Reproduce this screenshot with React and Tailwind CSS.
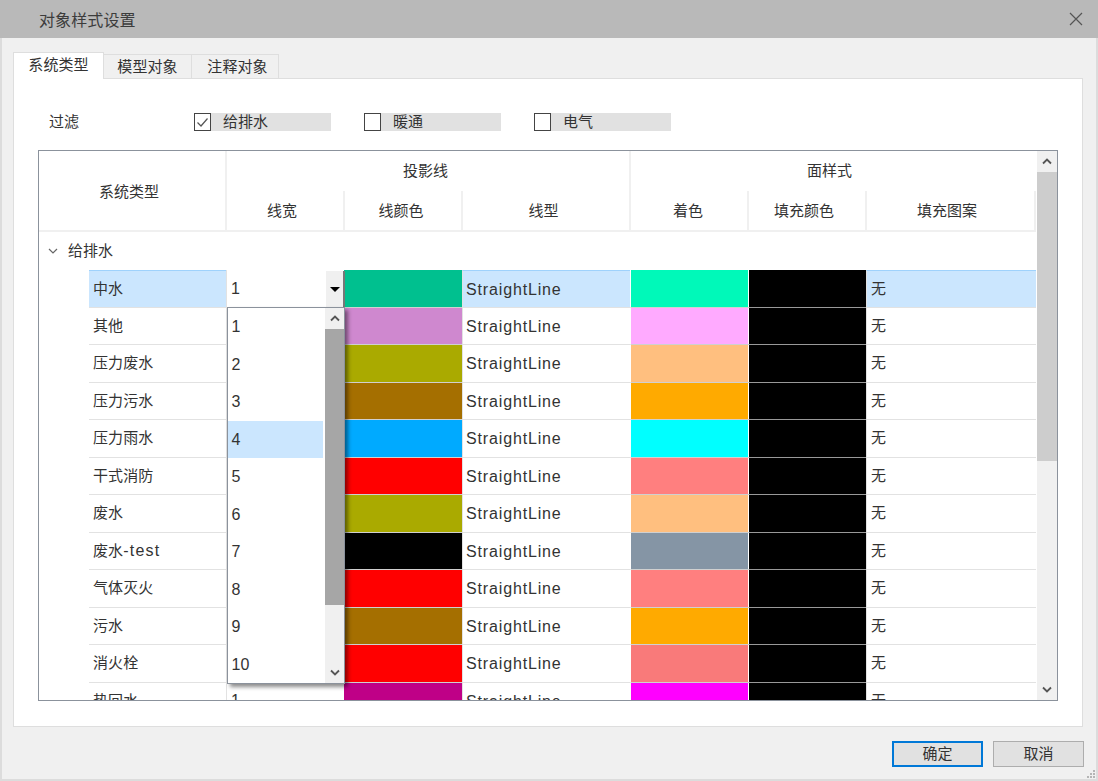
import React from "react";

const rows = [
    { name: "中水", line: "bg-[#00c08f]", face: "bg-[#00f9b9]" },
    { name: "其他", line: "bg-[#cf88cf]", face: "bg-[#ffaaff]" },
    { name: "压力废水", line: "bg-[#aaaa00]", face: "bg-[#ffbf7f]" },
    { name: "压力污水", line: "bg-[#a56f00]", face: "bg-[#ffaa00]" },
    { name: "压力雨水", line: "bg-[#00aaff]", face: "bg-[#00ffff]" },
    { name: "干式消防", line: "bg-[#ff0000]", face: "bg-[#ff7f7f]" },
    { name: "废水", line: "bg-[#aaaa00]", face: "bg-[#ffbf7f]" },
    { name: "废水", suffix: "-test", line: "bg-[#000000]", face: "bg-[#8595a5]" },
    { name: "气体灭火", line: "bg-[#ff0000]", face: "bg-[#ff7f7f]" },
    { name: "污水", line: "bg-[#a56f00]", face: "bg-[#ffaa00]" },
    { name: "消火栓", line: "bg-[#ff0000]", face: "bg-[#f97a7a]" },
    { name: "热回水", line: "bg-[#bf0087]", face: "bg-[#ff00ff]" },
];

const widths = [1, 2, 3, 4, 5, 6, 7, 8, 9, 10];

// chunky scrollbar chevron
const Arrow = ({ up, className }) => (
    <svg width="10" height="7" viewBox="0 0 10 7" className={className}>
        <path d={up ? "M1 5.5 L5 1.5 L9 5.5" : "M1 1.5 L5 5.5 L9 1.5"} fill="none" stroke="#555" strokeWidth="1.8" />
    </svg>
);

const FilterCheck = ({ label, checked }) => (
    <div className="flex h-[18px] w-[137px] items-center bg-[#e1e1e1]">
        <div className="flex h-[18px] w-[17px] items-center justify-center border border-[#444] bg-white">
            {checked && (
                <svg width="13" height="11" viewBox="0 0 13 11">
                    <path d="M1.5 5.5 L5 9 L11.5 1.5" fill="none" stroke="#555" strokeWidth="1.2" />
                </svg>
            )}
        </div>
        <span className="ml-[12px] pt-px">{label}</span>
    </div>
);

const Row = ({ row, selected }) => {
    const cellBg = selected ? "bg-[#cbe6fe]" : "bg-white";
    const rowLine = selected ? "border-t border-t-[#9fd2fc]" : "";
    return (
        <div className="grid h-[37.5px] shrink-0 grid-cols-[50px_137px_118px_118px_168px_118px_118px_170px]">
            <div />
            <div className={`flex items-center border-b border-[#e2e2e2] pl-[4px] tracking-[0.1px] ${cellBg} ${rowLine}`}>
                {row.name}
                {row.suffix && <span className="text-[16px] tracking-[1.2px]">{row.suffix}</span>}
            </div>
            <div className="flex items-center border-b border-l border-[#e2e2e2] bg-white pl-[4px] pt-px text-[16px]">1</div>
            <div className={`border-b border-[#d0d0d0] ${row.line}`} />
            <div className={`flex items-center border-b border-l border-[#e2e2e2] pl-[3px] pt-[2px] text-[16px] tracking-[0.85px] ${cellBg} ${rowLine}`}>StraightLine</div>
            <div className={`border-b border-l border-[#d0d0d0] border-l-white ${row.face}`} />
            <div className="border-b border-l border-[#999] border-l-white bg-black" />
            <div className={`flex items-center border-b border-l border-[#e2e2e2] pl-[4px] ${cellBg} ${rowLine}`}>无</div>
        </div>
    );
};

const WidthDropdown = () => (
    <div className="absolute left-[188px] top-[156px] z-10 flex h-[377px] w-[118px] overflow-hidden border border-[#8b929c] bg-white shadow-[3px_3px_4px_rgba(0,0,0,0.45)]">
        <div className="flex w-[97px] flex-col">
            {widths.map((w) => (
                <div key={w} className={`flex h-[37.5px] w-[95px] shrink-0 items-center pl-[3.5px] pt-px text-[16px] ${w === 4 ? "bg-[#cbe6fe]" : ""}`}>
                    {w}
                </div>
            ))}
        </div>
        <div className="flex w-[19px] flex-col bg-[#f0f0f0]">
            <div className="flex h-[21px] shrink-0 items-center justify-center"><Arrow up /></div>
            <div className="h-[276px] bg-[#a6a6a6]" />
            <div className="mt-auto flex h-[22px] items-center justify-center"><Arrow /></div>
        </div>
    </div>
);

const App = () => {
    return (
        <div className="flex h-[781px] w-[1098px] flex-col overflow-hidden bg-[#f0f0f0] font-['Liberation_Sans','Noto_Sans_CJK_SC',sans-serif] text-[15px] text-[#333]">
            {/* Title bar */}
            <div className="flex h-[38px] shrink-0 items-center justify-between bg-[#b9b9b9] pl-[39px] pr-[15px]">
                <span className="pt-[3px] text-[16px] tracking-[0.1px] text-[#3c3c3c]">对象样式设置</span>
                <svg width="14" height="14" viewBox="0 0 14 14">
                    <path d="M1 1 L13 13 M13 1 L1 13" stroke="#555" strokeWidth="1.2" />
                </svg>
            </div>

            <div className="relative flex min-h-0 flex-1 flex-col border-x-2 border-b-2 border-[#dcdcdc] pl-[11px] pr-[12px] pt-[14px]">
                {/* Tabs */}
                <div className="relative z-10 flex h-[27px] items-end">
                    <div className="flex h-[27px] w-[91px] items-center justify-center border border-b-0 border-[#dedede] bg-white pb-[2px] tracking-[0.1px]">系统类型</div>
                    <div className="flex h-[25px] w-[88px] items-center justify-center border-y border-r border-[#dedede] bg-[#f0f0f0] pt-[1px] tracking-[0.1px]">模型对象</div>
                    <div className="flex h-[25px] w-[87px] items-center justify-center border-y border-r border-[#dedede] bg-[#f0f0f0] pl-[5px] pt-[1px] tracking-[0.1px]">注释对象</div>
                </div>

                {/* Panel */}
                <div className="-mt-px flex h-[649px] w-[1070px] flex-col border border-[#dedede] bg-white pl-[24px]">
                    <div className="mt-[34px] flex h-[18px] items-center">
                        <span className="ml-[11px] w-[145px] pt-px">过滤</span>
                        <div className="flex gap-[33px]">
                            <FilterCheck label="给排水" checked />
                            <FilterCheck label="暖通" />
                            <FilterCheck label="电气" />
                        </div>
                    </div>

                    {/* Table */}
                    <div className="mt-[19px] flex h-[551px] w-[1020px] border border-[#8b929c]">
                        <div className="relative flex w-[997px] flex-col overflow-hidden">
                            <div className="grid h-[81px] shrink-0 grid-cols-[188px_118px_118px_168px_118px_118px_169px] grid-rows-[40px_41px] border-b-2 border-[#f0f0f0]">
                                <div className="row-span-2 flex items-center justify-center border-r-2 border-[#f0f0f0] pr-[6px] pt-[2px]">系统类型</div>
                                <div className="col-span-3 flex items-center justify-center border-r-2 border-[#f0f0f0] pr-[5px]">投影线</div>
                                <div className="col-span-3 flex items-center justify-center pr-[8px]">面样式</div>
                                <div className="flex items-center justify-center border-r-2 border-[#f0f0f0] pr-[6px]">线宽</div>
                                <div className="flex items-center justify-center border-r-2 border-[#f0f0f0] pr-[4px]">线颜色</div>
                                <div className="flex items-center justify-center border-r-2 border-[#f0f0f0] pr-[5px]">线型</div>
                                <div className="flex items-center justify-center border-r-2 border-[#f0f0f0] pr-[2px]">着色</div>
                                <div className="flex items-center justify-center border-r-2 border-[#f0f0f0] pr-[6px]">填充颜色</div>
                                <div className="flex items-center justify-center border-r-2 border-[#f0f0f0] pr-[7px]">填充图案</div>
                            </div>

                            <div className="flex h-[38px] shrink-0 items-center pl-[9px]">
                                <svg width="10" height="6" viewBox="0 0 10 6">
                                    <path d="M1 1 L5 5 L9 1" fill="none" stroke="#666" strokeWidth="1.2" />
                                </svg>
                                <span className="ml-[10px]">给排水</span>
                            </div>

                            {rows.map((row, i) => (
                                <Row key={row.name + (row.suffix || "")} row={row} selected={i === 0} />
                            ))}

                            {/* Combo arrow on the row being edited */}
                            <div className="absolute left-[287px] top-[120px] flex h-[36px] w-[19px] items-center justify-center border-r-2 border-[#777] bg-[#f0f0f0]">
                                <div className="h-0 w-0 border-x-[5px] border-t-[5px] border-x-transparent border-t-black" />
                            </div>

                            <WidthDropdown />
                        </div>

                        {/* Vertical scrollbar */}
                        <div className="ml-px flex w-[20px] flex-col bg-[#f0f0f0]">
                            <div className="flex h-[21px] items-center justify-center"><Arrow up /></div>
                            <div className="h-[289px] bg-[#cdcdcd]" />
                            <div className="mt-auto flex h-[22px] items-center justify-center"><Arrow /></div>
                        </div>
                    </div>
                </div>

                {/* Buttons */}
                <div className="mt-[14px] flex justify-end gap-[10px]">
                    <button className="flex h-[26px] w-[91px] items-center justify-center border-2 border-[#0078d7] bg-[#e1e1e1] pt-px">确定</button>
                    <button className="flex h-[26px] w-[91px] items-center justify-center border border-[#adadad] bg-[#e1e1e1] pt-px">取消</button>
                </div>

                {/* Resize grip */}
                <svg width="10" height="10" viewBox="0 0 10 10" className="absolute bottom-0 right-0">
                    <path d="M7 1h2v2h-2z M4 4h2v2h-2z M7 4h2v2h-2z M1 7h2v2h-2z M4 7h2v2h-2z M7 7h2v2h-2z" fill="#b5b5b5" />
                </svg>
            </div>
        </div>
    );
};

export default App;
